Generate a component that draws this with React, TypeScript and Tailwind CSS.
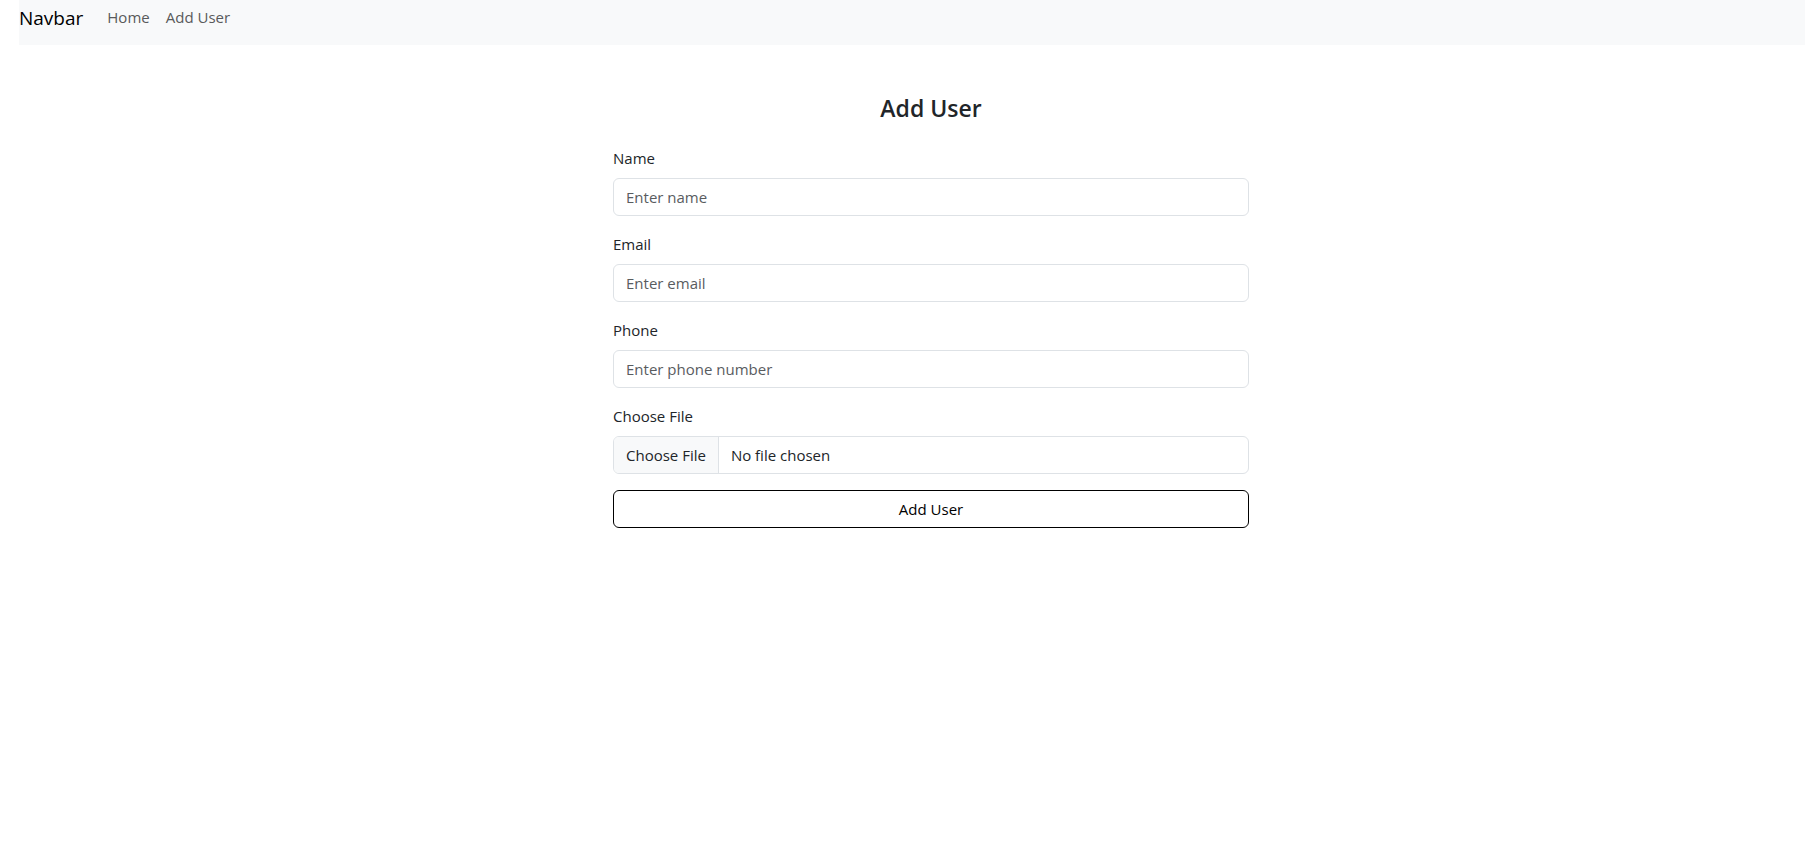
const control =
  'block h-[38px] w-full rounded-md border border-[#dee2e6] bg-white px-3 py-1 text-[15px] leading-7 text-[#212529] placeholder:text-[#595c5f] placeholder:opacity-100';

const fields = [
  { id: 'name', label: 'Name', type: 'text', placeholder: 'Enter name' },
  { id: 'email', label: 'Email', type: 'email', placeholder: 'Enter email' },
  { id: 'phone', label: 'Phone', type: 'tel', placeholder: 'Enter phone number' },
];

function Navbar() {
  return (
    <nav className="ml-[19px] flex h-[45px] items-start bg-[#f8f9fa]">
      <a href="#" className="mr-6 text-[19px] leading-9 text-black">
        Navbar
      </a>
      <ul className="flex gap-4 text-[15px] leading-[34px] text-[#595a5b]">
        <li>
          <a href="#home">Home</a>
        </li>
        <li>
          <a href="#add-user">Add User</a>
        </li>
      </ul>
    </nav>
  );
}

export default function App() {
  return (
    <div className="min-h-screen bg-white font-['Open_Sans',sans-serif] text-[15px] text-[#212529]">
      <Navbar />
      <main className="pt-[49px] pl-[57px]">
        <form className="mx-auto max-w-[636px]">
          <h1 className="mb-6 text-center text-[23px] leading-7 font-semibold">Add User</h1>
          {fields.map((field) => (
            <div key={field.id} className="mb-4">
              <label htmlFor={field.id} className="mb-2 block leading-6">
                {field.label}
              </label>
              <input id={field.id} type={field.type} placeholder={field.placeholder} className={control} />
            </div>
          ))}
          <div className="mb-4">
            <label htmlFor="file" className="mb-2 block leading-6">
              Choose File
            </label>
            <input
              id="file"
              type="file"
              className="block h-[38px] w-full overflow-hidden rounded-md border border-[#dee2e6] bg-white text-[15px] leading-9 file:mr-3 file:h-9 file:border-r file:border-solid file:border-[#dee2e6] file:bg-[#f8f9fa] file:px-3 file:text-[#212529]"
            />
          </div>
          <button type="submit" className="block h-[38px] w-full rounded-md border border-black text-black">
            Add User
          </button>
        </form>
      </main>
    </div>
  );
}
